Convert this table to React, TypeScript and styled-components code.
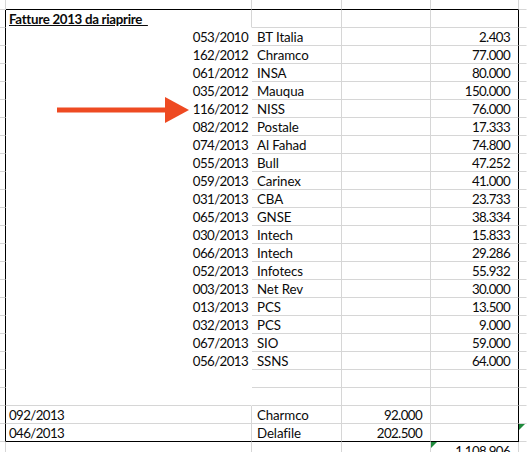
import styled, { createGlobalStyle, css } from 'styled-components';

const GlobalStyle = createGlobalStyle`
  html, body {
    margin: 0;
    padding: 0;
    background: #ffffff;
  }
  body {
    font-family: Lato, 'Liberation Sans', sans-serif;
    color: #0a0a0a;
  }
`;

type Line = 'none' | 'grid' | 'frame';

const lineColor = (line: Line) =>
  line === 'frame' ? '#000000' : line === 'grid' ? '#d6d6d6' : 'transparent';

const Page = styled.div`
  position: relative;
  width: 527px;
  height: 452px;
  overflow: hidden;
`;

const Sheet = styled.div`
  display: grid;
  grid-template-columns: 6px 246px 90px 89px 88px 1fr;
  grid-template-rows: 10px;
  grid-auto-rows: 18px;
  font-size: 13.3px;
  letter-spacing: -0.6px;
`;

const Cell = styled.div<{
  $align?: 'left' | 'right';
  $pad?: number;
  $right?: Line;
  $bottom?: Line;
  $flag?: boolean;
}>`
  position: relative;
  box-sizing: border-box;
  padding: ${({ $align, $pad = 3 }) => ($align === 'right' ? `1px ${$pad}px 0 0` : `1px 0 0 ${$pad}px`)};
  text-align: ${({ $align }) => $align ?? 'left'};
  line-height: 17px;
  white-space: nowrap;
  overflow: hidden;
  border-right: 1px solid ${({ $right = 'grid' }) => lineColor($right)};
  border-bottom: 1px solid ${({ $bottom = 'grid' }) => lineColor($bottom)};
  ${({ $flag }) =>
    $flag &&
    css`
      &::before {
        content: '';
        position: absolute;
        left: 0;
        top: 0;
        border-top: 6px solid #1f8a3c;
        border-right: 6px solid transparent;
      }
    `}
`;

const NameCell = styled(Cell)`
  letter-spacing: -0.1px;
  padding-left: 5px;
`;

const Title = styled.span`
  font-weight: 700;
  letter-spacing: -0.3px;
  text-decoration: underline;
  white-space: pre;
`;

const Arrow = styled.svg`
  position: absolute;
  left: 56px;
  top: 96px;
`;

const invoices = [
  ['053/2010', 'BT Italia', '2.403'],
  ['162/2012', 'Chramco', '77.000'],
  ['061/2012', 'INSA', '80.000'],
  ['035/2012', 'Mauqua', '150.000'],
  ['116/2012', 'NISS', '76.000'],
  ['082/2012', 'Postale', '17.333'],
  ['074/2013', 'Al Fahad', '74.800'],
  ['055/2013', 'Bull', '47.252'],
  ['059/2013', 'Carinex', '41.000'],
  ['031/2013', 'CBA', '23.733'],
  ['065/2013', 'GNSE', '38.334'],
  ['030/2013', 'Intech', '15.833'],
  ['066/2013', 'Intech', '29.286'],
  ['052/2013', 'Infotecs', '55.932'],
  ['003/2013', 'Net Rev', '30.000'],
  ['013/2013', 'PCS', '13.500'],
  ['032/2013', 'PCS', '9.000'],
  ['067/2013', 'SIO', '59.000'],
  ['056/2013', 'SSNS', '64.000'],
];

const extra = [
  ['092/2013', 'Charmco', '92.000'],
  ['046/2013', 'Delafile', '202.500'],
];

export default function App() {
  return (
    <Page>
      <GlobalStyle />
      <Sheet>
        {/* row above the frame */}
        <Cell />
        <Cell $bottom="frame" />
        <Cell $bottom="frame" />
        <Cell $bottom="frame" />
        <Cell $bottom="frame" />
        <Cell $right="none" />

        {/* title */}
        <Cell $right="frame" />
        <Cell $bottom="none">
          <Title>{'Fatture 2013 da riaprire  '}</Title>
        </Cell>
        <Cell />
        <Cell />
        <Cell $right="frame" />
        <Cell $right="none" />

        {invoices.map(([num, name, amount]) => (
          <Row key={num + name} num={num} name={name} amount={amount} />
        ))}

        {[0, 1].map((i) => (
          <Blank key={i} last={i === 1} />
        ))}

        {extra.map(([num, name, amount], i) => (
          <Tail key={num} num={num} name={name} amount={amount} last={i === extra.length - 1} />
        ))}

        {/* total */}
        <Cell />
        <Cell />
        <Cell />
        <Cell />
        <Cell $align="right" $pad={8} $flag>
          1.108.906
        </Cell>
        <Cell $right="none" />
      </Sheet>

      <Arrow width="134" height="28" viewBox="0 0 134 28">
        <rect x="1" y="11.5" width="110" height="5" fill="#ee4a22" />
        <polygon points="109,1 133,14 109,27" fill="#ee4a22" />
      </Arrow>
    </Page>
  );
}

function Row({ num, name, amount }: { num: string; name: string; amount: string }) {
  return (
    <>
      <Cell $right="frame" />
      <Cell $align="right" $right="none" $bottom="none">
        {num}
      </Cell>
      <NameCell>{name}</NameCell>
      <Cell />
      <Cell $align="right" $pad={8} $right="frame">
        {amount}
      </Cell>
      <Cell $right="none" />
    </>
  );
}

function Blank({ last }: { last: boolean }) {
  return (
    <>
      <Cell $right="frame" />
      <Cell $right="none" $bottom={last ? 'grid' : 'none'} />
      <Cell />
      <Cell />
      <Cell $right="frame" />
      <Cell $right="none" />
    </>
  );
}

function Tail({ num, name, amount, last }: { num: string; name: string; amount: string; last: boolean }) {
  const edge: Line = last ? 'frame' : 'grid';
  return (
    <>
      <Cell $right="frame" />
      <Cell $bottom={edge}>{num}</Cell>
      <NameCell $bottom={edge}>{name}</NameCell>
      <Cell $align="right" $pad={8} $bottom={edge}>
        {amount}
      </Cell>
      <Cell $right="frame" $bottom={edge} />
      <Cell $right="none" $flag={last} />
    </>
  );
}
